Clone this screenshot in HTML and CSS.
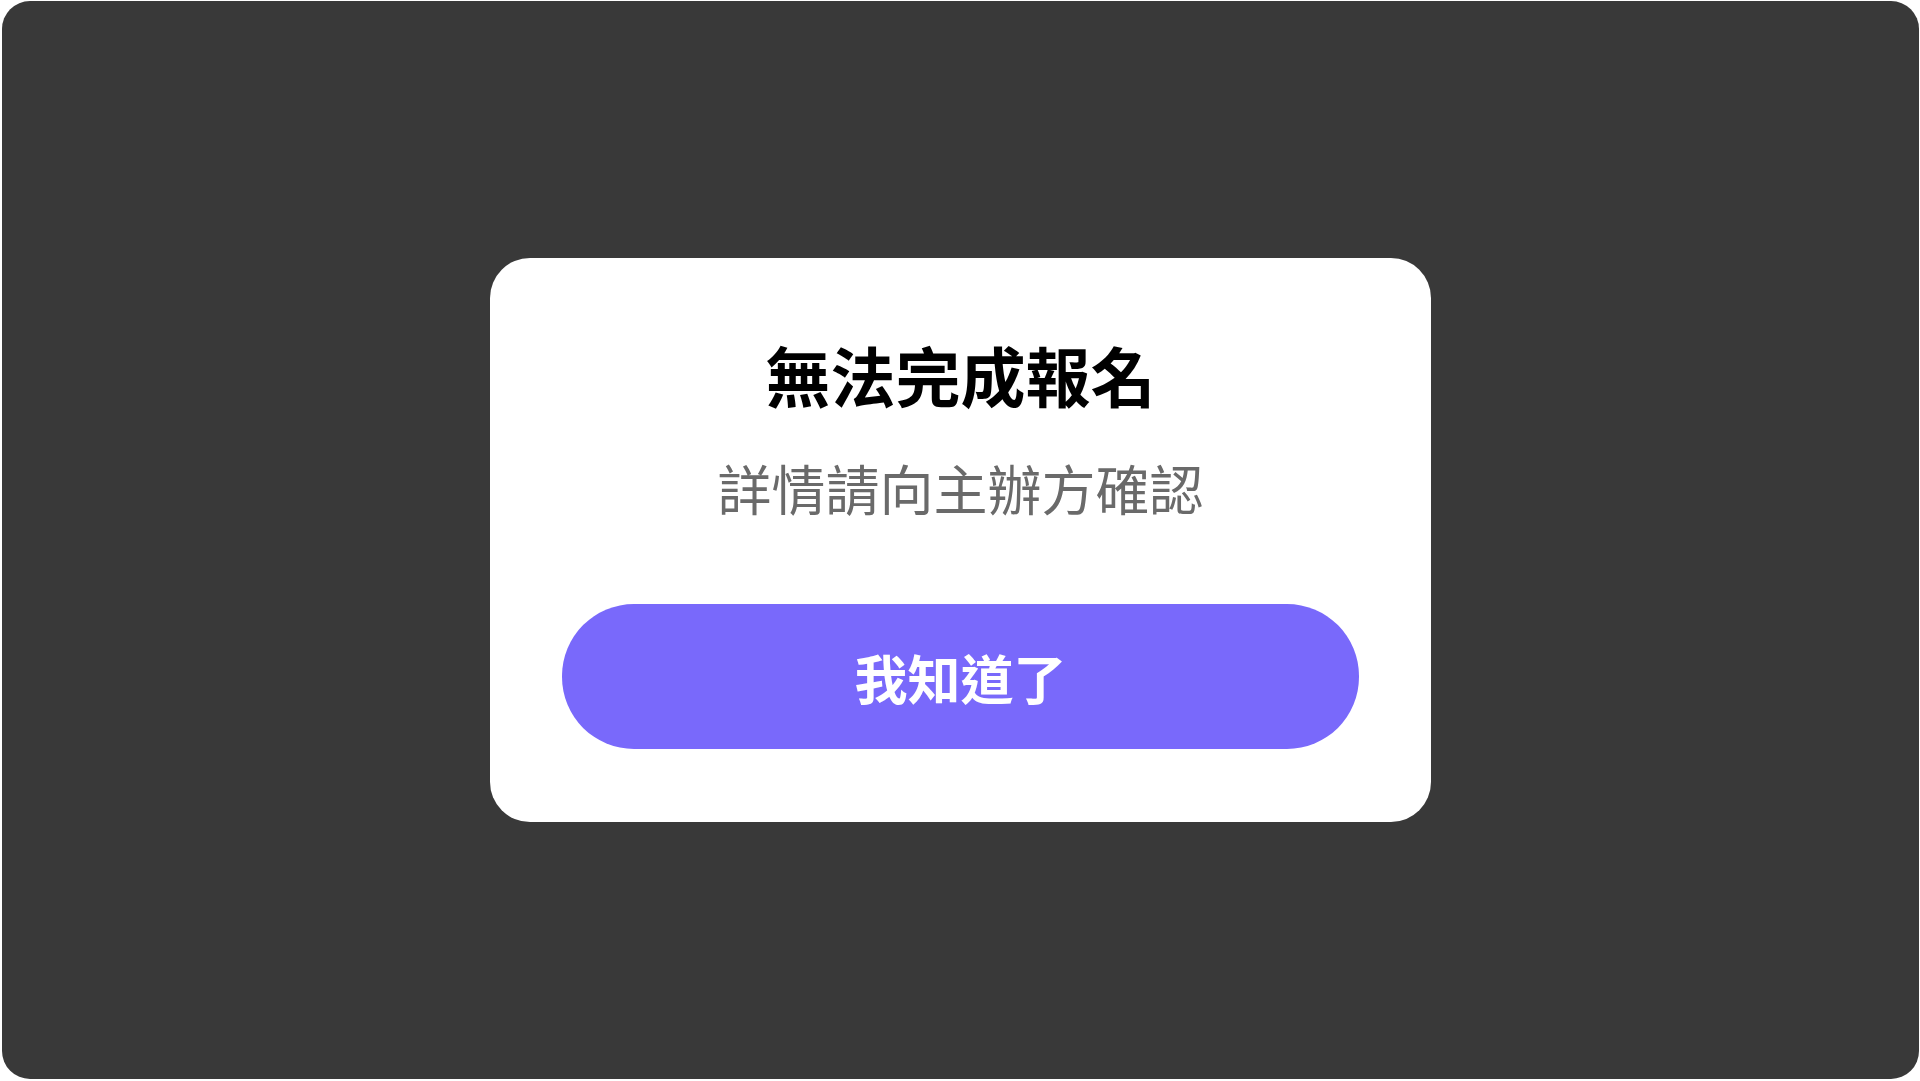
FILE: index.html
```html
<!DOCTYPE html>
<html lang="zh-Hant">
<head>
<meta charset="utf-8">
<title>無法完成報名</title>
<link rel="stylesheet" href="styles.css">
</head>
<body>
<div class="screen">
  <div class="dialog">
    <h1 class="title">無法完成報名</h1>
    <p class="message">詳情請向主辦方確認</p>
    <button class="ok-button" type="button">我知道了</button>
  </div>
</div>
</body>
</html>
```
FILE: styles.css
```css
html, body {
  margin: 0;
  padding: 0;
  background: #ffffff;
}
body {
  height: 1081px;
  font-family: "Noto Sans CJK TC", "Noto Sans CJK SC", "Noto Sans", sans-serif;
}
.screen {
  box-sizing: border-box;
  margin: 1px 1px 0 2px;
  height: 1078px;
  background: #393939;
  border-radius: 28px;
  display: flex;
  align-items: center;
  justify-content: center;
}
.dialog {
  box-sizing: border-box;
  width: 941px;
  padding: 71px 72px 73px;
  background: #ffffff;
  border-radius: 40px;
  display: flex;
  flex-direction: column;
  align-items: center;
}
.title {
  margin: 0;
  font-size: 65px;
  line-height: 1.4;
  font-weight: 700;
  color: #000000;
}
.message {
  margin: 30px 0 0;
  font-size: 54px;
  line-height: 1.4;
  font-weight: 400;
  color: #6a6a6a;
}
.ok-button {
  margin-top: 79px;
  width: 100%;
  height: 145px;
  border: none;
  border-radius: 72px;
  background: #7969fb;
  color: #ffffff;
  font-family: inherit;
  font-size: 53px;
  font-weight: 700;
  padding: 0;
}
```
